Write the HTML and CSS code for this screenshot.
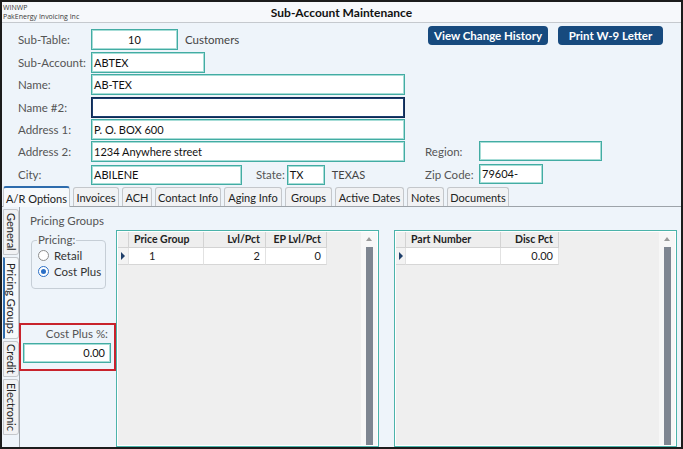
FILE: index.html
```html
<!DOCTYPE html>
<html>
<head>
<meta charset="utf-8">
<link rel="stylesheet" href="styles.css">
</head>
<body>
<div class="win">
  <div class="titlebar">
    <div class="app"><div>WINWP</div><div>PakEnergy Invoicing Inc</div></div>
    <div class="title">Sub-Account Maintenance</div>
    <div></div>
  </div>

  <div class="form">
    <div class="lbl">Sub-Table:</div>
    <div class="fld"><div class="inp w87 center">10</div><span class="after">Customers</span></div>
    <div></div>
    <div class="btns"><button class="btn b1">View Change History</button><button class="btn b2">Print W-9 Letter</button></div>

    <div class="lbl">Sub-Account:</div>
    <div class="fld"><div class="inp w114">ABTEX</div></div>
    <div class="rest"></div>

    <div class="lbl">Name:</div>
    <div class="fld"><div class="inp full">AB-TEX</div></div>
    <div class="rest"></div>

    <div class="lbl">Name #2:</div>
    <div class="fld"><div class="inp full focus"></div></div>
    <div class="rest"></div>

    <div class="lbl">Address 1:</div>
    <div class="fld"><div class="inp full">P. O. BOX 600</div></div>
    <div class="rest"></div>

    <div class="lbl">Address 2:</div>
    <div class="fld"><div class="inp full">1234 Anywhere street</div></div>
    <div></div>
    <div class="lbl">Region:</div>
    <div class="fld"><div class="inp w123 h20"></div></div>

    <div class="lbl">City:</div>
    <div class="fld"><div class="inp w151 h20">ABILENE</div><span class="lbl state">State:</span><div class="inp w38 h20">TX</div><span class="after texas">TEXAS</span></div>
    <div></div>
    <div class="lbl">Zip Code:</div>
    <div class="fld"><div class="inp w64 h20">79604-</div></div>
  </div>

  <div class="tabs">
    <div class="tab sel t1">A/R Options</div>
    <div class="tab t2">Invoices</div>
    <div class="tab t3">ACH</div>
    <div class="tab t4">Contact Info</div>
    <div class="tab t5">Aging Info</div>
    <div class="tab t6">Groups</div>
    <div class="tab t7">Active Dates</div>
    <div class="tab t8">Notes</div>
    <div class="tab t9">Documents</div>
  </div>

  <div class="content">
    <div class="vtabs">
      <div class="vtab v1">General</div>
      <div class="vtab v2 sel">Pricing Groups</div>
      <div class="vtab v3">Credit</div>
      <div class="vtab v4">Electronic</div>
    </div>
    <div class="panel">
      <div class="ptitle">Pricing Groups</div>
      <div class="pbody">
        <div class="leftcol">
          <fieldset class="pricing">
            <legend>Pricing:</legend>
            <div class="radio"><span class="dot"></span>Retail</div>
            <div class="radio"><span class="dot on"></span>Cost Plus</div>
          </fieldset>
          <div class="costplus">
            <div class="cplbl">Cost Plus %:</div>
            <div class="inp cpinp">0.00</div>
          </div>
        </div>

        <div class="grid g1">
          <div class="gtable">
            <div class="grow ghead">
              <div class="c ind"></div>
              <div class="c cw75">Price Group</div>
              <div class="c cw62 r">Lvl/Pct</div>
              <div class="c cw61 r">EP Lvl/Pct</div>
            </div>
            <div class="grow gdata">
              <div class="c ind"><span class="arrow"></span></div>
              <div class="c cw75 pg">1</div>
              <div class="c cw62 r">2</div>
              <div class="c cw61 r">0</div>
            </div>
          </div>
          <div class="sbar"><span class="up"></span><span class="thumb"></span></div>
        </div>

        <div class="grid g2">
          <div class="gtable">
            <div class="grow ghead">
              <div class="c ind2"></div>
              <div class="c cw95">Part Number</div>
              <div class="c cw58 r">Disc Pct</div>
            </div>
            <div class="grow gdata">
              <div class="c ind2"><span class="arrow"></span></div>
              <div class="c cw95"></div>
              <div class="c cw58 r">0.00</div>
            </div>
          </div>
          <div class="sbar"><span class="up"></span><span class="thumb"></span></div>
        </div>
      </div>
    </div>
  </div>
</div>
</body>
</html>
```

FILE: styles.css
```css
* { box-sizing: border-box; }
body { margin: 0; font-family: Lato, "Open Sans", sans-serif; font-size: 11px; color: #1a1a1a; }

.win {
  width: 683px; height: 449px;
  border: 2px solid #1c1c1c;
  background: #eef4fa;
  display: flex; flex-direction: column;
  overflow: hidden;
}

.titlebar {
  height: 21px; flex: none;
  background: #f6f8fb;
  border-bottom: 1px solid #c5c9ce;
  display: grid; grid-template-columns: 1fr auto 1fr;
  align-items: center;
}
.app { align-self: start; padding-left: 1px; font-family: "Open Sans", sans-serif; font-size: 7px; line-height: 9px; color: #3a3a3a; padding-top: 1px; }
.title { font-weight: 700; font-size: 12px; color: #111; padding-top: 1px; }

.form {
  flex: none;
  padding: 6px 0 0 16px;
  display: grid;
  grid-template-columns: 73px 314px 20px 54px 123px;
  grid-template-rows: 23px 22px 23px 22px 22px 23px 21px;
  align-items: start;
}
.lbl { color: #555; font-size: 11.5px; line-height: 21px; white-space: nowrap; }
.fld { display: flex; align-items: center; }
.rest { grid-column: 3 / span 3; }
.inp {
  height: 21px; line-height: 19px;
  background: #fff;
  border: 1px solid #43aca3;
  box-shadow: inset 0 0 0 1px #a7ddd7;
  padding: 0 2px;
  font-size: 11px; color: #111;
  white-space: nowrap; overflow: hidden;
}
.inp.h20 { height: 20px; line-height: 18px; }
.inp.center { text-align: center; }
.inp.focus { border-color: #0f2a52; box-shadow: inset 0 0 0 1px #1b3d6e; }
.w87 { width: 87px; }
.w114 { width: 114px; }
.w123 { width: 123px; }
.w151 { width: 151px; }
.w38 { width: 38px; }
.w64 { width: 64px; }
.full { width: 314px; }
.after { color: #444; font-size: 11.5px; margin-left: 7px; }
.state { margin-left: 14px; margin-right: 2px; }
.texas { margin-left: 7px; font-size: 11px; }

.btns { grid-column: 4 / span 2; display: flex; gap: 10px; margin-left: 3px; margin-top: -3px; }
.btn {
  flex: none;
  height: 19px; border: 0; border-radius: 4px;
  background: #174a7e; color: #fff;
  font-family: inherit; font-weight: 700; font-size: 11.5px;
  padding: 0; white-space: nowrap;
}
.b1 { width: 120px; }
.b2 { width: 105px; }

.tabs {
  flex: none; height: 22px;
  display: flex; align-items: flex-end; gap: 3px;
  padding-left: 1px;
  border-bottom: 1px solid #9da3a9;
}
.tab {
  flex: none;
  height: 19px; line-height: 15px; padding-top: 2px;
  background: #f1f2f4;
  border: 1px solid #c4c7cb; border-bottom: 0;
  border-radius: 3px 3px 0 0;
  font-size: 11px; color: #222; text-align: center;
  white-space: nowrap;
}
.tab.sel { background: #f6f9fc; border-top: 2px solid #2e6cad; margin-bottom: -1px; height: 21px; padding-top: 3px; }
.t1 { width: 67px; }
.t2 { width: 46px; }
.t3 { width: 30px; }
.t4 { width: 66px; }
.t5 { width: 58px; }
.t6 { width: 47px; }
.t7 { width: 69px; }
.t8 { width: 37px; }
.t9 { width: 62px; }

.content { flex: 1; display: flex; min-height: 0; }
.vtabs { width: 18px; flex: none; padding: 2px 0 0 1px; display: flex; flex-direction: column; gap: 2px; border-right: 1px solid #9da3a9; }
.vtab {
  width: 16px; writing-mode: vertical-rl;
  background: #f1f2f4; border: 1px solid #c4c7cb;
  border-radius: 0 3px 3px 0;
  font-size: 11px; color: #222; line-height: 14px;
  text-align: center; white-space: nowrap;
}
.vtab.sel { background: #f6f9fc; border-left: 2px solid #2e6cad; }
.v1 { height: 46px; }
.v2 { height: 82px; }
.v3 { height: 36px; }
.v4 { height: 56px; }

.panel { flex: 1; display: flex; flex-direction: column; min-width: 0; }
.ptitle { height: 23px; padding-left: 10px; line-height: 28px; color: #555; font-size: 11.5px; flex: none; }
.pbody { flex: 1; display: flex; min-height: 0; }
.leftcol { width: 96px; flex: none; }

.pricing {
  margin: 4px 0 0 11px; width: 75px; height: 55px;
  border: 1px solid #c6ced6; border-radius: 4px;
  padding: 0 0 0 6px;
}
.pricing legend { padding: 0 1px; margin-left: -1px; color: #555; font-size: 11.5px; line-height: 12px; }
.radio { display: flex; align-items: center; height: 16px; font-size: 11.5px; color: #333; white-space: nowrap; }
.radio:first-of-type { margin-top: 1px; }
.dot {
  width: 11px; height: 11px; border-radius: 50%; flex: none;
  border: 1px solid #8d8d8d; background: #fff;
  margin-right: 5px; display: inline-flex; align-items: center; justify-content: center;
}
.dot.on { border-color: #2b6fc6; }
.dot.on::after { content: ""; width: 5px; height: 5px; border-radius: 50%; background: #2b6fc6; }

.costplus {
  margin: 34px 0 0 -1px; width: 97px; height: 48px;
  border: 2px solid #c8232c;
  padding: 0 0 0 2px;
}
.cplbl { text-align: right; padding-right: 6px; color: #555; font-size: 11.5px; line-height: 18px; }
.cpinp { width: 88px; height: 20px; line-height: 18px; text-align: right; padding-right: 5px; }

.grid {
  flex: none;
  border: 1px solid #4bb3aa;
  box-shadow: inset 0 0 0 1px #ffffff;
  background: #efefef;
  display: flex;
  padding: 1px;
}
.g1 { width: 263px; }
.g2 { width: 283px; margin-left: 15px; }
.gtable { flex: 1; }
.grow { display: flex; }
.c { flex: none; white-space: nowrap; padding: 0 5px; font-size: 10.5px; }
.ghead .c { height: 16px; line-height: 15px; background: #eeeeee; border-right: 1px solid #d3d3d3; border-bottom: 1px solid #d3d3d3; font-weight: 700; color: #222; }
.gdata .c { height: 17px; line-height: 16px; background: #fff; border-right: 1px solid #e2e2e2; border-bottom: 1px solid #d6d6d6; color: #222; font-size: 11px; }
.r { text-align: right; }
.pg { padding-left: 20px; }
.ind { width: 11px; padding: 0; }
.ind2 { width: 10px; padding: 0; }
.ghead .ind, .ghead .ind2 { background: #efefef; }
.gdata .ind, .gdata .ind2 { background: #f3f3f3; display: flex; align-items: center; justify-content: center; }
.cw75 { width: 75px; }
.cw62 { width: 62px; }
.cw61 { width: 61px; }
.cw95 { width: 95px; }
.cw58 { width: 58px; }
.arrow { width: 0; height: 0; border-top: 4px solid transparent; border-bottom: 4px solid transparent; border-left: 4px solid #1f3f6a; }

.sbar { width: 16px; flex: none; background: #f7f7f7; display: flex; flex-direction: column; align-items: center; padding-top: 5px; }
.up { width: 0; height: 0; border-left: 3px solid transparent; border-right: 3px solid transparent; border-bottom: 4px solid #9a9a9a; }
.thumb { width: 7px; flex: 1; background: #7e8691; margin-top: 6px; margin-left: 1px; }
```
